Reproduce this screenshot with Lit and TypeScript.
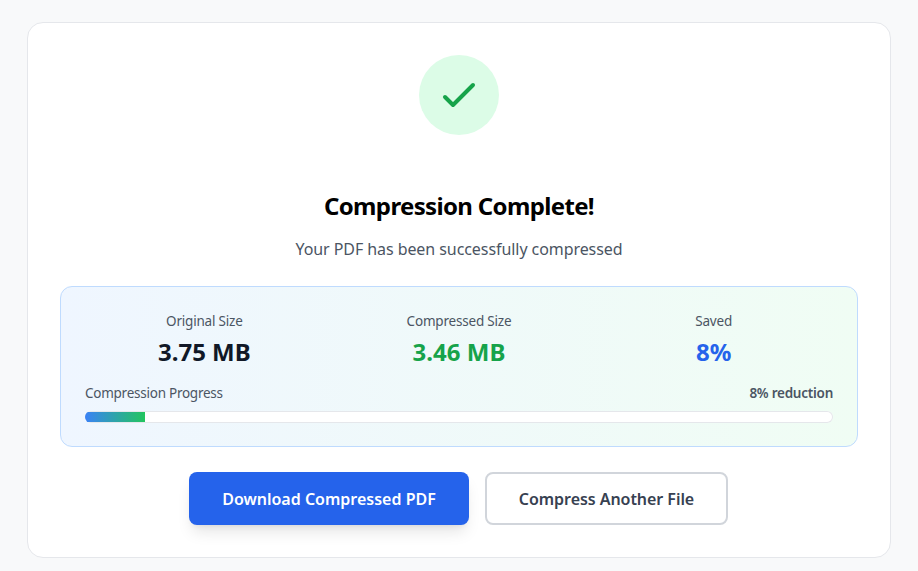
import { LitElement, html, css } from "lit";
import { customElement } from "lit/decorators.js";

@customElement("app-root")
export class AppRoot extends LitElement {
  static styles = css`
    :host {
      display: block;
      height: 571px;
      overflow: hidden;
      background: #f8f9fa;
      font-family: "Noto Sans", sans-serif;
      color: #000;
    }
    .page { padding: 22px 27px 0 27px; }
    .card {
      box-sizing: border-box;
      height: 536px;
      background: #fff;
      border: 1px solid #e5e7eb;
      border-radius: 16px;
      padding: 32px;
      display: flex;
      flex-direction: column;
      align-items: center;
    }
    .badge {
      width: 80px;
      height: 80px;
      border-radius: 50%;
      background: #dcfce7;
      display: flex;
      align-items: center;
      justify-content: center;
      margin-bottom: 24px;
    }
    .badge svg { width: 48px; height: 48px; stroke: #16a34a; fill: none; stroke-width: 2; stroke-linecap: round; stroke-linejoin: round; }
    h2 { margin: 31px 0 15px; font-size: 24px; line-height: 32px; font-weight: 700; letter-spacing: -0.65px; }
    .sub { margin: 0 0 25px; font-size: 16px; line-height: 24px; color: #4b5563; letter-spacing: -0.07px; }
    .stats {
      box-sizing: border-box;
      width: 100%;
      height: 161px;
      border: 1px solid #bfdbfe;
      border-radius: 12px;
      background: linear-gradient(to right, #eff6ff, #f0fdf4);
      padding: 24px;
      margin-bottom: 25px;
    }
    .grid { display: grid; grid-template-columns: repeat(3, 1fr); gap: 16px; text-align: center; margin-bottom: 15px; }
    .label { font-size: 13.5px; line-height: 20px; color: #4b5563; letter-spacing: -0.2px; }
    .val { font-size: 24px; line-height: 32px; font-weight: 700; margin-top: 5px; }
    .dark { color: #111827; } .green { color: #16a34a; } .blue { color: #2563eb; }
    .prog-row { display: flex; justify-content: space-between; font-size: 13.5px; line-height: 20px; color: #4b5563; margin-bottom: 8px; letter-spacing: -0.25px; }
    .prog-row b { font-weight: 600; }
    .track { height: 12px; box-sizing: border-box; padding: 1px 0; box-shadow: inset 0 0 0 1px #e5e7eb; border-radius: 999px; background: #fff; overflow: hidden; }
    .fill { height: 10px; background: linear-gradient(to right, #3b82f6, #22c55e); }
    .actions { display: flex; gap: 16px; padding-right: 1px; }
    button {
      font-family: inherit; font-size: 16px; font-weight: 600; border-radius: 8px; height: 53px; box-sizing: border-box; cursor: pointer; padding: 0;
    }
    .primary { width: 280px; background: #2563eb; color: #fff; border: 0; box-shadow: 0 10px 15px -3px rgba(0,0,0,.1), 0 4px 6px -4px rgba(0,0,0,.1); }
    .secondary { width: 243px; background: #fff; color: #374151; border: 2px solid #d1d5db; letter-spacing: -0.05px; }
  `;
  render() {
    return html`<div class="page"><div class="card">
      <div class="badge"><svg viewBox="0 0 24 24"><path d="M5 13l4 4L19 7"/></svg></div>
      <h2>Compression Complete!</h2>
      <p class="sub">Your PDF has been successfully compressed</p>
      <div class="stats">
        <div class="grid">
          <div><div class="label">Original Size</div><div class="val dark">3.75 MB</div></div>
          <div><div class="label">Compressed Size</div><div class="val green">3.46 MB</div></div>
          <div><div class="label">Saved</div><div class="val blue">8%</div></div>
        </div>
        <div class="prog-row"><span>Compression Progress</span><b>8% reduction</b></div>
        <div class="track"><div class="fill" style="width: 8%"></div></div>
      </div>
      <div class="actions">
        <button class="primary">Download Compressed PDF</button>
        <button class="secondary">Compress Another File</button>
      </div>
    </div></div>`;
  }
}
